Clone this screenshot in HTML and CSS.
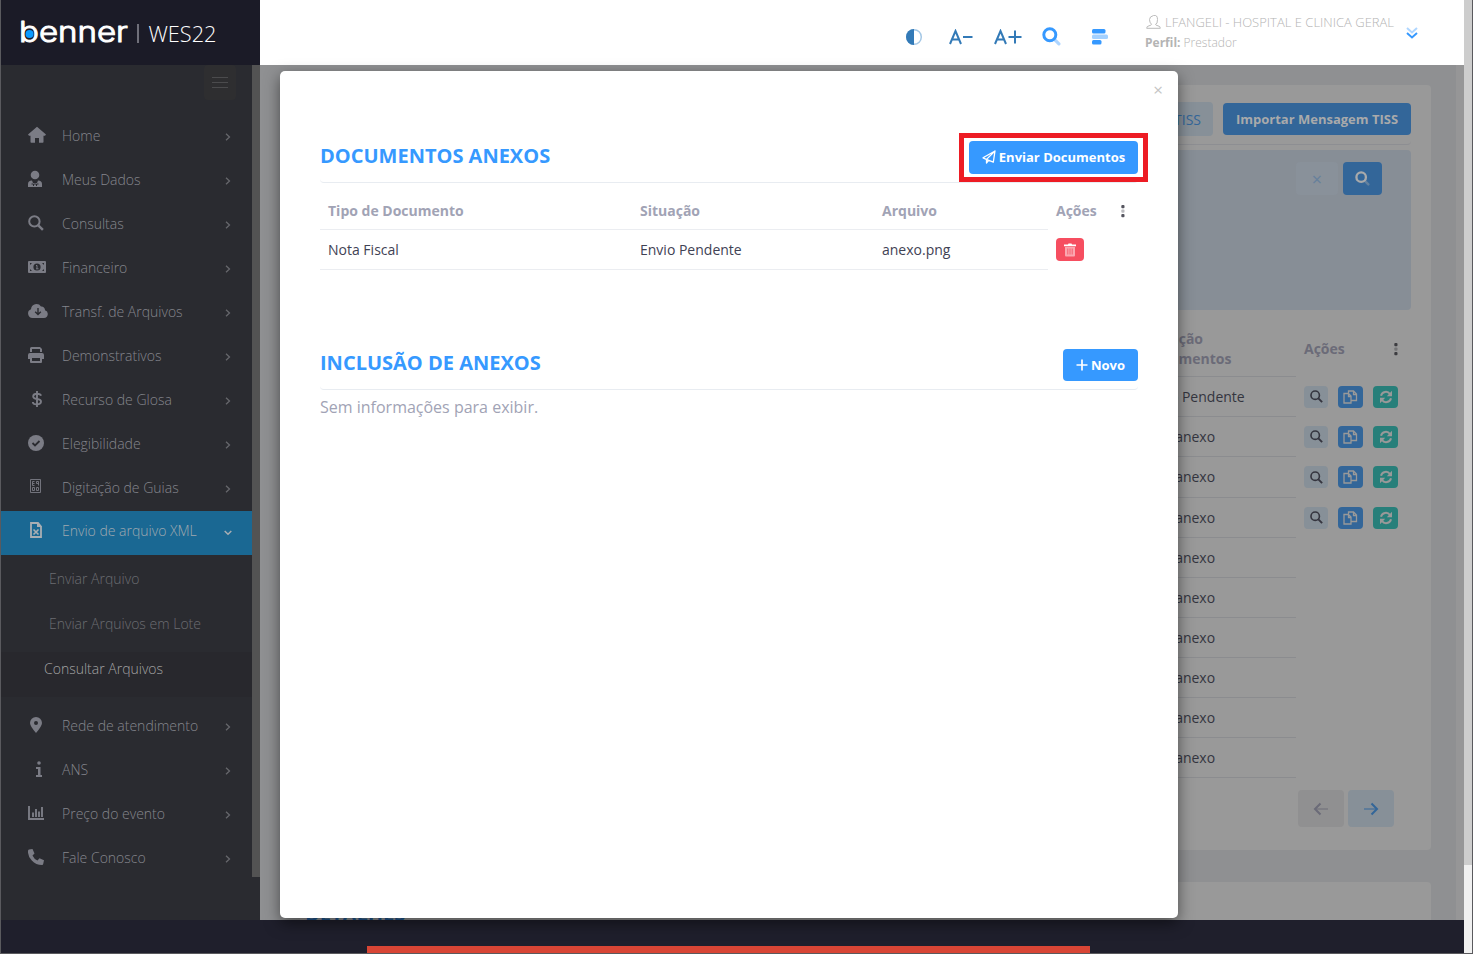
FILE: index.html
```html
<!DOCTYPE html>
<html lang="pt-BR">
<head>
<meta charset="utf-8">
<title>WES22</title>
<link rel="stylesheet" href="styles.css">
</head>
<body>
<svg class="defs" width="0" height="0">
  <symbol id="zoom" viewBox="0 0 16 16"><circle cx="6.4" cy="6.4" r="5.2" fill="none" stroke="currentColor" stroke-width="2"/><path d="M10.3 10.3l4.6 4.6" stroke="currentColor" stroke-width="2.4"/></symbol>
  <symbol id="duozoom" viewBox="0 0 18 18"><path d="M11.8 11.8l4.2 4.2" stroke="currentColor" stroke-width="3" opacity=".4" stroke-linecap="round"/><circle cx="7.4" cy="7.4" r="5.7" fill="none" stroke="currentColor" stroke-width="2.8"/></symbol>
  <symbol id="copy" viewBox="0 0 15 14"><path d="M1 3.500h4.500L8 6v7H1zM5.500 3.500V6.500H8M5.500 3.500V1h5l3 3v6.500H8M10.500 1v3.500h3" fill="none" stroke="currentColor" stroke-width="1.300"/></symbol>
  <symbol id="sync" viewBox="0 0 14 14"><path d="M2 5.800A5 5 0 0 1 11 4M12 8.200A5 5 0 0 1 3 10" fill="none" stroke="currentColor" stroke-width="2"/><path d="M13 .8v5.400H7.800zM1 13.200V7.800h5.200z" fill="currentColor"/></symbol>
  <symbol id="dots" viewBox="0 0 4 14"><rect x=".3" y="1" width="3.200" height="3.200" rx="1"/><rect x=".3" y="5.500" width="3.200" height="3.200" rx="1" opacity=".4"/><rect x=".3" y="10" width="3.200" height="3.200" rx="1"/></symbol>
  <symbol id="chev" viewBox="0 0 6 8"><path d="M1 .7L4.500 4 1 7.300" fill="none" stroke="currentColor" stroke-width="1.300"/></symbol>
</svg>
<div class="app">
  <div class="columns">
    <aside class="side">
      <div class="brand">
        <svg width="220" height="65">
          <text class="logo" x="19" y="42" textLength="109" lengthAdjust="spacingAndGlyphs">benner</text>
          <circle cx="29.500" cy="34" r="4" fill="#0a9bff"/>
          <path d="M138 24v19" stroke="#8d8d96" stroke-width="1.500"/>
          <text class="product" x="148.500" y="42" textLength="68" lengthAdjust="spacingAndGlyphs">WES22</text>
        </svg>
      </div>
      <div class="side-body">
        <nav class="nav">
          <div class="toggle"><i></i><i></i><i></i></div>
          <a class="item"><svg class="ico" viewBox="0 0 18 18"><path d="M9 .8L0 8.500l1 1.300h1.500V16q0 .8.8.8H7V12h4v4.800h3.700q.8 0 .8-.8V9.800H17l1-1.300z"/></svg><span>Home</span><svg class="chev"><use href="#chev"/></svg></a>
          <a class="item"><svg class="ico" viewBox="0 0 18 18"><circle cx="7" cy="5" r="4.300"/><path d="M0 17v-3q0-3.500 4-3.500l1 2.500h4l1-2.500q4 0 4 3.500v3z"/><path d="M3.500 14h2v2M8.500 16v-2h2M7 11v4" stroke="#2a2b30" fill="none"/></svg><span>Meus Dados</span><svg class="chev"><use href="#chev"/></svg></a>
          <a class="item"><svg class="ico" viewBox="0 0 18 18"><use href="#zoom" width="16" height="16" y="1"/></svg><span>Consultas</span><svg class="chev"><use href="#chev"/></svg></a>
          <a class="item"><svg class="ico" viewBox="0 0 18 18"><rect y="3" width="18" height="12" rx="1"/><circle cx="9" cy="9" r="3.600" fill="#2a2b30"/><path d="M8 7.500h1v3M8 10.800h2.500" stroke="#7b7c85" fill="none"/><path d="M2 7V5h2zM14 5h2v2zM2 11v2h2zM16 11v2h-2z" fill="#2a2b30"/></svg><span>Financeiro</span><svg class="chev"><use href="#chev"/></svg></a>
          <a class="item"><svg class="ico wide" viewBox="0 0 20 18"><path d="M4.500 16A4.500 4.500 0 0 1 3 7.300 5.500 5.500 0 0 1 13 4.500 3.500 3.500 0 0 1 17 8.200 4 4 0 0 1 16 16z"/><path d="M10 6v6M7.200 9.800L10 12.600l2.800-2.800" fill="none" stroke="#2a2b30" stroke-width="1.400"/></svg><span>Transf. de Arquivos</span><svg class="chev"><use href="#chev"/></svg></a>
          <a class="item"><svg class="ico" viewBox="0 0 18 18"><path d="M2 6V2.500Q2 1 3.500 1H12l2 2v3h-2V3H4v3zM2 7h12q2 0 2 2v4h-2v3q0 1-1 1H3q-1 0-1-1v-3H0V9q0-2 2-2zM4 12v3h8v-3z" fill-rule="evenodd"/></svg><span>Demonstrativos</span><svg class="chev"><use href="#chev"/></svg></a>
          <a class="item"><svg class="ico" viewBox="0 0 18 18"><path d="M9 1v16M13 5.800Q12.500 3.800 9 3.800T5.200 6.200 9 9t4 2.800-4 2.600-4.200-2.400" fill="none" stroke="#7b7c85" stroke-width="1.900"/></svg><span>Recurso de Glosa</span><svg class="chev"><use href="#chev"/></svg></a>
          <a class="item"><svg class="ico" viewBox="0 0 18 18"><circle cx="8" cy="9" r="8"/><path d="M4.500 9l2.500 2.400L11.500 7" fill="none" stroke="#2a2b30" stroke-width="1.800"/></svg><span>Elegibilidade</span><svg class="chev"><use href="#chev"/></svg></a>
          <a class="item"><svg class="ico up" viewBox="0 0 18 18"><path d="M2.500 2.500h10v13h-10zM6.500 4.500h-2v4h2M4.500 6.500h2M10.500 8.500v-4h-2v2h2M4.500 10.500h2v3h-2zM8.500 10.500h2v3h-2z" fill="none" stroke="#7b7c85" stroke-width=".9"/></svg><span>Digitação de Guias</span><svg class="chev"><use href="#chev"/></svg></a>
          <a class="item active"><svg class="ico" viewBox="0 0 18 18"><path d="M3 2h7l3 3.500V16H3z" fill="none" stroke="#a9aeb3" stroke-width="1.800"/><path d="M9 1l5 5H9z" fill="#a9aeb3"/><path d="M5.500 8.500l5 5M10.500 8.500l-5 5" stroke="#a9aeb3" stroke-width="1.600"/></svg><span>Envio de arquivo XML</span><svg class="down" viewBox="0 0 8 6"><path d="M.7 1L4 4.300 7.300 1" fill="none" stroke="#a9aeb3" stroke-width="1.500"/></svg></a>
          <div class="sub">
            <a>Enviar Arquivo</a>
            <a>Enviar Arquivos em Lote</a>
            <a class="current">Consultar Arquivos</a>
          </div>
          <a class="item"><svg class="ico" viewBox="0 0 18 18"><path d="M8 1a6 6 0 0 1 6 6q0 3-6 10Q2 10 2 7a6 6 0 0 1 6-6zm0 4a2 2 0 1 0 0 4 2 2 0 0 0 0-4z" fill-rule="evenodd"/></svg><span>Rede de atendimento</span><svg class="chev"><use href="#chev"/></svg></a>
          <a class="item"><svg class="ico" viewBox="0 0 18 18"><circle cx="11" cy="3" r="1.800"/><path d="M8 7h4.500v8H14v2H8v-2h2V9H8z"/></svg><span>ANS</span><svg class="chev"><use href="#chev"/></svg></a>
          <a class="item"><svg class="ico" viewBox="0 0 18 18"><path d="M1 2v13h15M5 13V8.500M8 13V5M11 13V7.500M14 13V3" fill="none" stroke="#7b7c85" stroke-width="1.900"/></svg><span>Preço do evento</span><svg class="chev"><use href="#chev"/></svg></a>
          <a class="item"><svg class="ico" viewBox="0 0 18 18"><path d="M1 1.500L4.500 1l2 4.500L4.500 7.500q1.500 3.500 5 5l2-2.300 4.500 2-.8 3.800q-.2 1-1.200 1Q8 17 3.800 12.500T0 3q0-1.200 1-1.500z"/></svg><span>Fale Conosco</span><svg class="chev"><use href="#chev"/></svg></a>
        </nav>
        <div class="side-scroll"></div>
      </div>
    </aside>
    <div class="main">
      <header class="top">
        <div class="tools">
          <svg width="18" height="18" viewBox="0 0 18 18"><circle cx="9" cy="9" r="7.300" fill="none" stroke="#a5c8e6" stroke-width="1.500"/><path d="M9 1a8 8 0 0 0 0 16z" fill="#337ab7"/></svg>
          <svg width="24" height="16" viewBox="0 0 24 16"><path d="M1 15L6.500 2 12 15M3 10.500h7M14 8h9.500" fill="none" stroke="#337ab7" stroke-width="2"/></svg>
          <svg width="28" height="16" viewBox="0 0 28 16"><path d="M1 15L6.500 2 12 15M3 10.500h7M14.500 8h13M21 1.500v13" fill="none" stroke="#337ab7" stroke-width="2"/></svg>
          <svg class="blue" width="19" height="19"><use href="#duozoom"/></svg>
          <svg width="16" height="16" viewBox="0 0 16 16" fill="#3699ff"><rect y="0" width="13.500" height="4.500" rx="1.500"/><rect y="5.500" width="16" height="4.500" rx="1.500" opacity=".45"/><rect y="11" width="9.500" height="4.500" rx="1.500"/></svg>
        </div>
        <div class="user">
          <div class="name"><svg width="15" height="14" viewBox="0 0 15 14"><path d="M5.500 9.300Q3.500 7.500 3.500 4.500t4-4 4 4-2 4.800q0 1 2.500 1.500t2.300 2.500H.7q-.2-2 2.300-2.500t2.500-1.500z" fill="none" stroke="#bbb"/></svg>LFANGELI - HOSPITAL E CLINICA GERAL</div>
          <div class="role"><b>Perfil:</b> Prestador</div>
        </div>
        <svg class="more" width="12" height="12" viewBox="0 0 12 12" fill="none" stroke="#3699ff" stroke-width="2"><path d="M1 1l5 4.500L11 1" opacity=".4"/><path d="M1 6l5 4.500L11 6"/></svg>
      </header>
      <div class="page">
        <section class="card results">
          <div class="card-head"><span class="btn-soft">Baixar Mensagem TISS</span><span class="btn-import">Importar Mensagem TISS</span></div>
          <div class="filter"><span class="clear">×</span><span class="search"><svg width="15" height="15"><use href="#duozoom"/></svg></span></div>
          <div class="list">
            <div class="list-head"><span>Situação<br>Documentos</span><span class="acts">Ações<svg width="4" height="14"><use href="#dots"/></svg></span></div>
            <div class="row"><span>Envio Pendente</span><div class="acts"><i class="a1"><svg><use href="#zoom"/></svg></i><i class="a2"><svg><use href="#copy"/></svg></i><i class="a3"><svg><use href="#sync"/></svg></i></div></div>
            <div class="row"><span>Sem anexo</span><div class="acts"><i class="a1"><svg><use href="#zoom"/></svg></i><i class="a2"><svg><use href="#copy"/></svg></i><i class="a3"><svg><use href="#sync"/></svg></i></div></div>
            <div class="row tall"><span>Sem anexo</span><div class="acts"><i class="a1"><svg><use href="#zoom"/></svg></i><i class="a2"><svg><use href="#copy"/></svg></i><i class="a3"><svg><use href="#sync"/></svg></i></div></div>
            <div class="row"><span>Sem anexo</span><div class="acts"><i class="a1"><svg><use href="#zoom"/></svg></i><i class="a2"><svg><use href="#copy"/></svg></i><i class="a3"><svg><use href="#sync"/></svg></i></div></div>
            <div class="row"><span>Sem anexo</span></div>
            <div class="row"><span>Sem anexo</span></div>
            <div class="row"><span>Sem anexo</span></div>
            <div class="row"><span>Sem anexo</span></div>
            <div class="row"><span>Sem anexo</span></div>
            <div class="row"><span>Sem anexo</span></div>
          </div>
          <div class="pager">
            <span class="prev"><svg width="16" height="14" viewBox="0 0 16 14" fill="none" stroke="currentColor" stroke-width="2"><path d="M2 7h13" opacity=".5"/><path d="M7.500 1.500L2 7l5.500 5.500"/></svg></span>
            <span class="next"><svg width="16" height="14" viewBox="0 0 16 14" fill="none" stroke="currentColor" stroke-width="2"><path d="M1 7h13" opacity=".5"/><path d="M8.500 1.500L14 7l-5.500 5.500"/></svg></span>
          </div>
        </section>
        <section class="card details"><h2>DETALHES</h2></section>
      </div>
    </div>
  </div>
  <footer class="foot"><div class="alert"></div></footer>
</div>
<div class="scroll"><div class="thumb"></div></div>

<div class="modal">
  <div class="close">×</div>
  <section class="block">
    <div class="block-head"><h2>DOCUMENTOS ANEXOS</h2>
      <div class="send"><svg width="14" height="14" viewBox="0 0 14 14" fill="none" stroke="#fff" stroke-width="1.300" stroke-linejoin="round"><path d="M13 1L1 7.800l3.300 1.600L11.300 12.200zM13 1L4.500 9.400V13l2-2.600"/></svg>Enviar Documentos<div class="mark"></div></div>
    </div>
    <div class="docs">
      <div class="cells head"><span>Tipo de Documento</span><span>Situação</span><span>Arquivo</span></div>
      <div class="tail head">Ações<svg width="4" height="14"><use href="#dots"/></svg></div>
      <div class="cells"><span>Nota Fiscal</span><span>Envio Pendente</span><span>anexo.png</span></div>
      <div class="tail"><i class="del"><svg width="12" height="14" viewBox="0 0 12 14"><path d="M1 4h10v8.500q0 1-1 1H2q-1 0-1-1z" fill="#fff" opacity=".5"/><path d="M0 1.500h4L4.500.5h3L8 1.500h4V3.200H0z" fill="#fff"/><path d="M3.800 5.500v6M6 5.500v6M8.200 5.500v6" stroke="#f64e60" stroke-width=".8"/></svg></i></div>
    </div>
  </section>
  <section class="block add">
    <div class="block-head"><h2>INCLUSÃO DE ANEXOS</h2><div class="new"><svg width="12" height="12" viewBox="0 0 12 12"><path d="M6 .5v11M.5 6h11" stroke="#fff" stroke-width="1.700"/></svg>Novo</div></div>
    <p>Sem informações para exibir.</p>
  </section>
</div>
</body>
</html>
```

FILE: styles.css
```css
* { box-sizing: border-box; }
body { margin: 0; width: 1473px; height: 954px; overflow: hidden; display: flex; position: relative; border: solid #5a5a5e; border-width: 0 1px 1px; font: 14px/20px "Open Sans", sans-serif; color: #3f4254; background: #999; }
h2, p { margin: 0; }
i { font-style: normal; }
.defs { position: absolute; }
.app { width: 1463px; height: 953px; display: flex; flex-direction: column; }
.columns { height: 920px; display: flex; overflow: hidden; }

.side { width: 259px; flex: none; display: flex; flex-direction: column; }
.brand { height: 65px; background: #1b1b27; }
.brand svg { display: block; margin-left: -1px; }
.logo { font: 300 29px Inter, sans-serif; fill: #fff; stroke: #fff; stroke-width: 1px; stroke-linejoin: round; }
.product { font: 300 22px "Open Sans", sans-serif; fill: #fff; }
.side-body { flex: 1; display: flex; background: #2a2b30; }
.nav { width: 251px; display: flex; flex-direction: column; }
.side-scroll { width: 8px; height: 812px; background: #535353; }
.toggle { width: 32px; height: 35px; margin: 0 16px 15px auto; padding: 12px 8px; display: flex; flex-direction: column; gap: 4px; background: #2e2e30; border-radius: 4px; }
.toggle i { height: 1px; background: #4b4b4d; }
.item { height: 44px; padding: 0 21px 2px 27px; display: flex; align-items: center; color: #85868d; font-weight: 300; }
.item span { flex: 1; }
.ico { width: 18px; height: 18px; margin: 0 16px 2px 0; fill: #7b7c85; color: #7b7c85; }
.ico.wide { width: 20px; margin-right: 14px; }
.ico.up { margin-bottom: 5px; }
.chev { width: 6px; height: 8px; margin-top: 2px; color: #66676c; }
.down { width: 8px; height: 6px; margin-top: 3px; margin-right: -1px; }
.item.active { background: #1a6893; color: #a0a9b0; padding-bottom: 4px; }
.sub { padding: 7px 0 8px; display: flex; flex-direction: column; }
.sub a { height: 45px; padding: 7px 0 0 48px; color: #6c6d72; font-weight: 300; }
.sub .current { padding-left: 43px; background: #28282d; color: #a3a3a3; }

.main { flex: 1; display: flex; flex-direction: column; }
.top { height: 65px; flex: none; background: #fff; display: flex; padding-left: 645px; }
.tools { width: 240px; display: flex; align-items: flex-start; padding-top: 28px; }
.tools svg:nth-child(2) { margin: 1px 0 0 26px; }
.tools svg:nth-child(3) { margin: 1px 0 0 21px; }
.tools svg:nth-child(4) { margin: -1px 0 0 20px; }
.tools svg:nth-child(5) { margin: 1px 0 0 31px; }
.blue { color: #3699ff; }
.user { width: 261px; padding-top: 12px; color: #b4b4b4; font-weight: 300; font-size: 13px; }
.name { display: flex; align-items: center; white-space: nowrap; }
.name svg { margin: 0 4px 0 1px; }
.role { margin-top: 1px; font-size: 12px; }
.role b { font-weight: 700; }
.more { margin-top: 27px; }

.page { flex: 1; display: flex; flex-direction: column; gap: 32px; padding: 20px 25px 0 40px; background: #8f9092; border-right: 8px solid #969697; }
.card { flex: none; background: #999; border-radius: 4px; }
.results { height: 765px; padding: 17px 20px 0; }
.details { height: 70px; padding: 20px 5px; }
.details h2 { color: #205c99; font-size: 20px; line-height: 24px; font-weight: 700; }
.card-head { height: 43px; display: flex; justify-content: flex-end; gap: 10px; border-bottom: 1px solid #8d8e92; border-radius: 4px; }
.btn-soft { height: 34px; padding: 0 12px; line-height: 35px; background: #879098; color: #336699; border-radius: 4px; }
.btn-import { width: 188px; height: 32px; margin-top: 1px; text-align: center; line-height: 32px; font-size: 13px; font-weight: 700; color: #a9aaab; background: #336699; border-radius: 4px; }
.filter { height: 160px; margin-top: 5px; padding: 12px 29px; display: flex; justify-content: flex-end; gap: 5px; background: #878e96; border-radius: 4px; }
.clear, .search { height: 33px; display: flex; align-items: center; justify-content: center; border-radius: 4px; }
.clear { width: 42px; background: #89919a; color: #66809c; font-size: 18px; }
.search { width: 39px; background: #336699; color: #a9aaab; }
.list { margin-top: 12px; width: 976px; }
.list-head { height: 55px; padding-top: 7px; display: flex; color: #6b6b78; font-weight: 700; }
.list-head > span:first-child, .row > span { width: 153px; padding-left: 0; margin-left: 823px; flex: none; }
.list-head > span:first-child { margin-top: -7px; padding-top: 7px; border-bottom: 1px solid #8b8c8f; }
.list-head > span:first-child, .row { box-shadow: none; }
.list-head .acts { margin-left: 8px; padding-top: 10px; width: 94px; flex: none; display: flex; justify-content: space-between; }
.list-head svg { margin-top: 3px; fill: #3c3c40; }
.row { height: 40px; display: flex; align-items: center; color: #34353f; border-bottom: 1px solid #8b8c8f; }
.row.tall { height: 41px; }
.row .acts { margin-left: 8px; width: 94px; flex: none; display: flex; gap: 10px; }
.acts i { width: 25px; height: 22px; flex: none; display: flex; align-items: center; justify-content: center; border-radius: 4px; }
.acts .a1 { width: 24px; background: #879098; color: #35353f; }
.acts .a2 { background: #336699; color: #999; }
.acts .a3 { background: #277f7a; color: #999; }
.acts i svg { width: 14px; height: 14px; }
.acts .a1 svg { width: 13px; height: 13px; }
.acts .a2 svg { width: 15px; }
.pager { display: flex; justify-content: flex-end; gap: 4px; padding: 12px 17px 0; }
.pager span { width: 46px; height: 37px; display: flex; align-items: center; justify-content: center; border-radius: 4px; }
.prev { background: #909091; color: #6b6b78; }
.next { background: #879098; color: #336699; }

.foot { height: 33px; background: #1f1f2c; display: flex; align-items: flex-end; padding-left: 366px; }
.alert { width: 723px; height: 7px; background: #d84535; }
.scroll { width: 8px; background: #f0f0f0; }
.thumb { height: 865px; background: #cdcdcd; }

.modal { position: absolute; left: 279px; top: 71px; width: 898px; height: 847px; padding: 0 40px; background: #fff; border-radius: 5px; box-shadow: 0 5px 15px rgba(0, 0, 0, .5); }
.close { height: 62px; margin-right: -25px; padding-top: 9px; text-align: right; color: #c4c4c4; font-size: 17px; }
.block-head { height: 50px; display: flex; justify-content: space-between; border-bottom: 1px solid #e8ecf1; border-radius: 4px; }
.block h2 { padding-top: 11px; font-size: 20px; line-height: 24px; font-weight: 700; color: #3699ff; }
.send, .new { display: flex; align-items: center; justify-content: center; gap: 3px; color: #fff; background: #3699ff; border-radius: 4px; font-size: 13px; font-weight: 700; }
.send { position: relative; width: 169px; height: 33px; margin-top: 8px; padding-bottom: 1px; }
.mark { position: absolute; left: -10px; top: -8px; width: 189px; height: 49px; border: 5px solid #ed1c24; }
.docs { display: grid; grid-template-columns: 728px 90px; grid-template-rows: 47px 40px; }
.cells { display: flex; align-items: center; padding: 0 8px; border-bottom: 1px solid #ebedf1; }
.cells span:nth-child(1) { width: 312px; }
.cells span:nth-child(2) { width: 242px; }
.head { color: #a1a3b5; font-weight: 700; padding-top: 10px; }
.tail { display: flex; align-items: center; justify-content: space-between; padding-left: 8px; padding-right: 13px; padding-bottom: 1px; }
.tail svg { fill: #55555f; }
.del { width: 28px; height: 23px; display: flex; align-items: center; justify-content: center; background: #f64e60; border-radius: 4px; }
.add { margin-top: 70px; }
.new { width: 75px; height: 32px; margin-top: 9px; }
.add p { margin-top: 6px; font-size: 16px; line-height: 22px; color: #a1a3b5; }
```
